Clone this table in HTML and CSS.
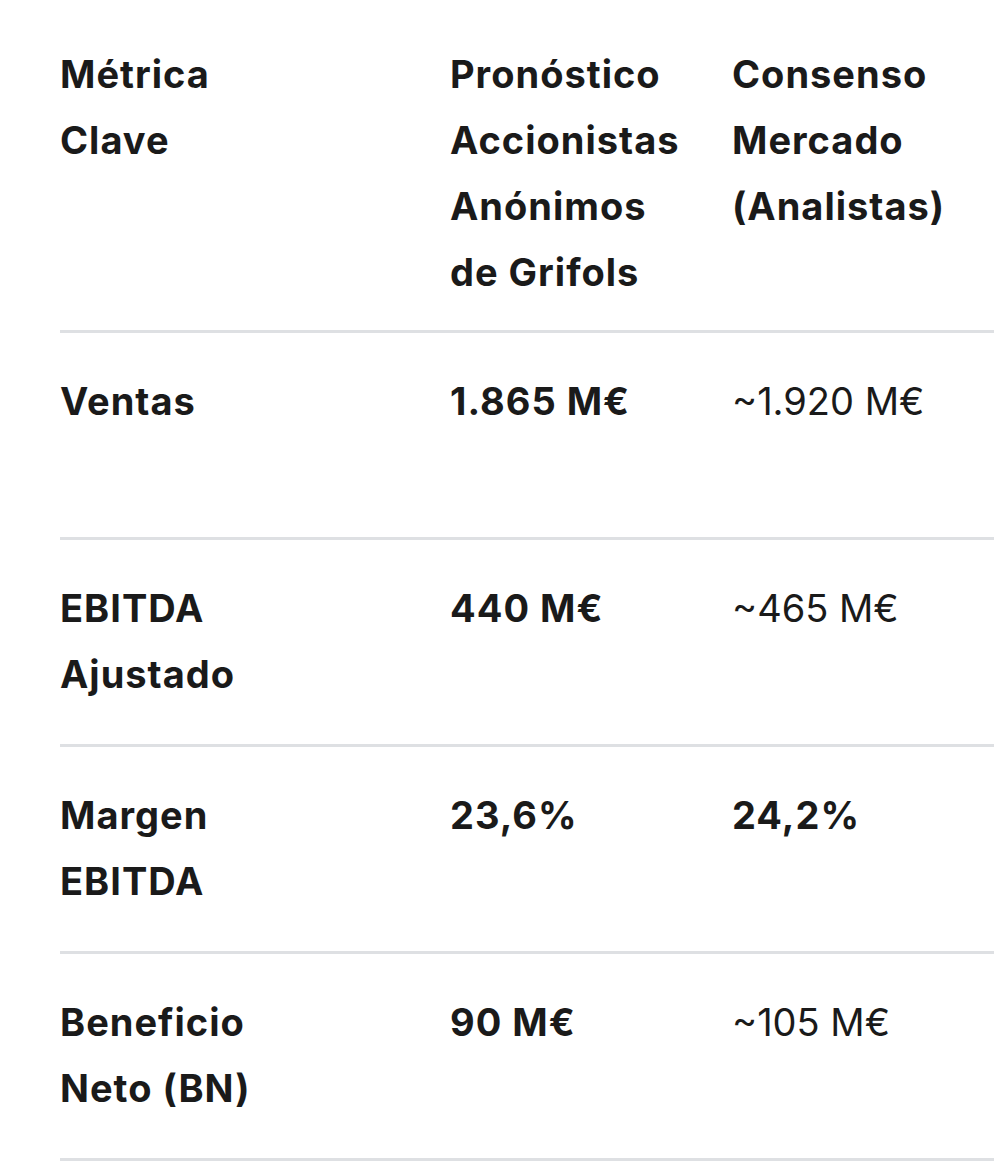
FILE: index.html
```html
<!DOCTYPE html>
<html lang="es">
<head>
<meta charset="utf-8">
<link rel="stylesheet" href="styles.css">
</head>
<body>
<div class="wrap">
  <div class="table">
    <div class="row head">
      <div class="cell c1">Métrica Clave</div>
      <div class="cell c2">Pronóstico Accionistas Anónimos de Grifols</div>
      <div class="cell c3">Consenso Mercado (Analistas)</div>
    </div>
    <div class="row body">
      <div class="cell c1 b">Ventas</div>
      <div class="cell c2 b">1.865 M€</div>
      <div class="cell c3">~1.920 M€</div>
    </div>
    <div class="row body">
      <div class="cell c1 b">EBITDA Ajustado</div>
      <div class="cell c2 b">440 M€</div>
      <div class="cell c3">~465 M€</div>
    </div>
    <div class="row body">
      <div class="cell c1 b">Margen EBITDA</div>
      <div class="cell c2 b">23,6%</div>
      <div class="cell c3 b">24,2%</div>
    </div>
    <div class="row body">
      <div class="cell c1 b">Beneficio Neto (BN)</div>
      <div class="cell c2 b">90 M€</div>
      <div class="cell c3">~105 M€</div>
    </div>
  </div>
</div>
</body>
</html>
```

FILE: styles.css
```css
html, body {
  margin: 0;
  padding: 0;
  background: #ffffff;
}
body {
  font-family: "Inter", "Open Sans", sans-serif;
  color: #1a1a1a;
  font-size: 38px;
  line-height: 66px;
  overflow: hidden;
}
.wrap {
  padding: 41px 0 0 60px;
  overflow: hidden;
}
.table {
  width: 1000px;
}
.row {
  display: grid;
  grid-template-columns: 390px 282px 1fr;
  border-bottom: 3px solid #dee0e3;
}
.head {
  font-weight: 700;
  letter-spacing: 1px;
  padding-bottom: 25px;
}
.body {
  padding: 35px 0 37px;
  min-height: 132px;
}
.cell {
  padding-right: 20px;
}
.c1 {
  padding-right: 170px;
}
.c2 {
  padding-right: 40px;
}
.b {
  font-weight: 700;
  letter-spacing: 1px;
}
```
